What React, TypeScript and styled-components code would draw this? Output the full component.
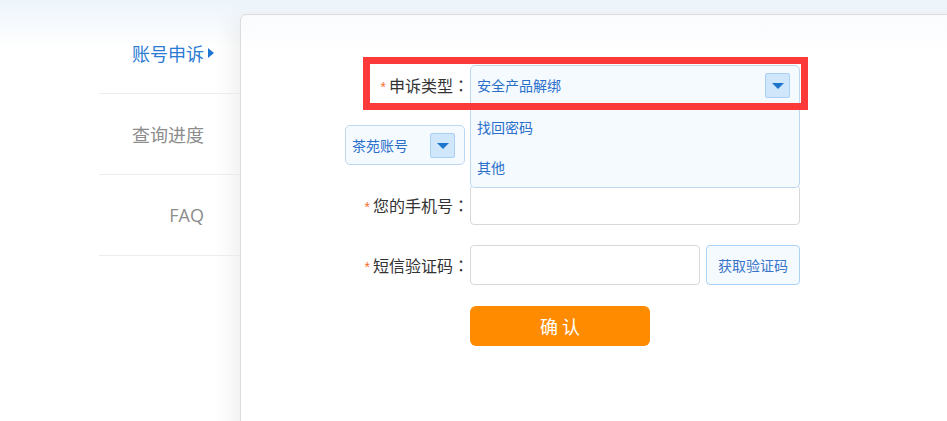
import React from "react";
import styled, { createGlobalStyle } from "styled-components";

const GlobalStyle = createGlobalStyle`
  html, body { margin: 0; padding: 0; }
  body {
    width: 947px;
    height: 421px;
    overflow: hidden;
    background: linear-gradient(#edf4fb 0px, #f6f9fd 24px, #ffffff 48px);
    font-family: "Open Sans", "Noto Sans CJK SC", sans-serif;
  }
`;

const Page = styled.div`
  display: flex;
  align-items: flex-start;
  width: 947px;
  height: 421px;
  overflow: hidden;
`;

const Nav = styled.nav`
  width: 141px;
  margin: 13px 0 0 99px;
  display: flex;
  flex-direction: column;
  flex-shrink: 0;
`;

const NavItem = styled.div<{ $active?: boolean }>`
  position: relative;
  height: 80px;
  border-bottom: 1px solid #ececec;
  display: flex;
  align-items: center;
  justify-content: flex-end;
  padding-right: 36px;
  font-size: 18px;
  color: ${(p) => (p.$active ? "#2a7bd3" : "#8c8c8c")};
`;

const NavArrow = styled.span`
  position: absolute;
  right: 26px;
  top: 50%;
  margin-top: -5px;
  width: 0;
  height: 0;
  border-top: 5px solid transparent;
  border-bottom: 5px solid transparent;
  border-left: 6px solid #1f77d0;
`;

const Panel = styled.main`
  flex-shrink: 0;
  width: 740px;
  height: 440px;
  margin-top: 14px;
  box-sizing: border-box;
  border: 1px solid #dcdcdc;
  border-top-left-radius: 6px;
  background: linear-gradient(#f9fbfd 0px, #ffffff 34px);
  box-shadow: -12px 0 22px -6px rgba(0, 0, 0, 0.07);
  padding: 50px 0 0 99px;
`;

const Form = styled.div`
  position: relative;
  display: flex;
  flex-direction: column;
  gap: 20px;
  width: 460px;
`;

const Row = styled.div`
  display: flex;
  align-items: center;
  height: 40px;
`;

const Label = styled.div`
  width: 130px;
  flex-shrink: 0;
  box-sizing: border-box;
  padding-right: 1px;
  text-align: right;
  font-size: 16px;
  color: #333;
  white-space: nowrap;
`;

const Colon = styled.span`
  font-family: "Noto Sans CJK TC", sans-serif;
`;

const LabelSlot = styled.div`
  width: 130px;
  flex-shrink: 0;
  display: flex;
  justify-content: center;
`;

const Star = styled.span`
  color: #f5702a;
  margin-right: 3px;
  font-family: "Liberation Sans", sans-serif;
  font-size: 14px;
`;

const SelectWrap = styled.div`
  position: relative;
`;

const SelectBox = styled.div<{ $w: number; $open?: boolean }>`
  width: ${(p) => p.$w}px;
  height: 40px;
  box-sizing: border-box;
  border: 1px solid #bcd8f0;
  border-radius: ${(p) => (p.$open ? "5px 5px 0 0" : "5px")};
  background: #f5faff;
  display: flex;
  align-items: center;
  justify-content: space-between;
  padding: 0 9px 0 6px;
  font-size: 14px;
  color: #2a6fc9;
`;

const ArrowBtn = styled.span`
  width: 25px;
  height: 25px;
  box-sizing: border-box;
  border: 1px solid #a9d0f3;
  border-radius: 2px;
  background: #cfe6fb;
  display: flex;
  align-items: center;
  justify-content: center;
  &::after {
    content: "";
    width: 0;
    height: 0;
    border-left: 6px solid transparent;
    border-right: 6px solid transparent;
    border-top: 6px solid #1c74cc;
    margin-top: 1px;
  }
`;

const OptionList = styled.ul`
  position: absolute;
  top: 100%;
  left: 0;
  z-index: 2;
  width: 330px;
  box-sizing: border-box;
  margin: 0;
  padding: 2px 0 0;
  list-style: none;
  background: #f5faff;
  border: 1px solid #bcd8f0;
  border-top: none;
  border-radius: 0 0 5px 5px;
`;

const Option = styled.li`
  height: 40px;
  display: flex;
  align-items: center;
  padding-left: 6px;
  font-size: 14px;
  color: #2a6fc9;
`;

const Input = styled.input<{ $w: number }>`
  width: ${(p) => p.$w}px;
  height: 40px;
  box-sizing: border-box;
  border: 1px solid #d8d8d8;
  border-radius: 4px;
  background: #fff;
  outline: none;
  padding: 0 8px;
  font-size: 14px;
`;

const CodeButton = styled.button`
  margin-left: 6px;
  width: 94px;
  height: 40px;
  box-sizing: border-box;
  border: 1px solid #acd4f8;
  border-radius: 4px;
  background: #f5faff;
  color: #3a74c8;
  font-family: inherit;
  font-size: 14px;
  padding: 0;
`;

const Submit = styled.button`
  margin: 2px 0 0 130px;
  width: 180px;
  height: 40px;
  border: none;
  border-radius: 6px;
  background: #ff8c00;
  color: #fff;
  font-family: inherit;
  font-size: 18px;
  letter-spacing: 4px;
  text-indent: 4px;
  padding: 0;
`;

const Highlight = styled.div`
  position: absolute;
  left: 23px;
  top: -8px;
  width: 445px;
  height: 53px;
  box-sizing: border-box;
  border: 7px solid #fc3a3a;
  z-index: 3;
  pointer-events: none;
`;

export default function App() {
  return (
    <>
      <GlobalStyle />
      <Page>
        <Nav>
          <NavItem $active>
            账号申诉
            <NavArrow />
          </NavItem>
          <NavItem>查询进度</NavItem>
          <NavItem>FAQ</NavItem>
        </Nav>
        <Panel>
          <Form>
            <Highlight />
            <Row>
              <Label>
                <Star>*</Star>申诉类型<Colon>：</Colon>
              </Label>
              <SelectWrap>
                <SelectBox $w={330} $open>
                  <span>安全产品解绑</span>
                  <ArrowBtn />
                </SelectBox>
                <OptionList>
                  <Option>找回密码</Option>
                  <Option>其他</Option>
                </OptionList>
              </SelectWrap>
            </Row>
            <Row>
              <LabelSlot>
                <SelectBox $w={120}>
                  <span>茶苑账号</span>
                  <ArrowBtn />
                </SelectBox>
              </LabelSlot>
              <Input $w={330} />
            </Row>
            <Row>
              <Label>
                <Star>*</Star>您的手机号<Colon>：</Colon>
              </Label>
              <Input $w={330} />
            </Row>
            <Row>
              <Label>
                <Star>*</Star>短信验证码<Colon>：</Colon>
              </Label>
              <Input $w={230} />
              <CodeButton>获取验证码</CodeButton>
            </Row>
            <Row>
              <Submit>确认</Submit>
            </Row>
          </Form>
        </Panel>
      </Page>
    </>
  );
}
